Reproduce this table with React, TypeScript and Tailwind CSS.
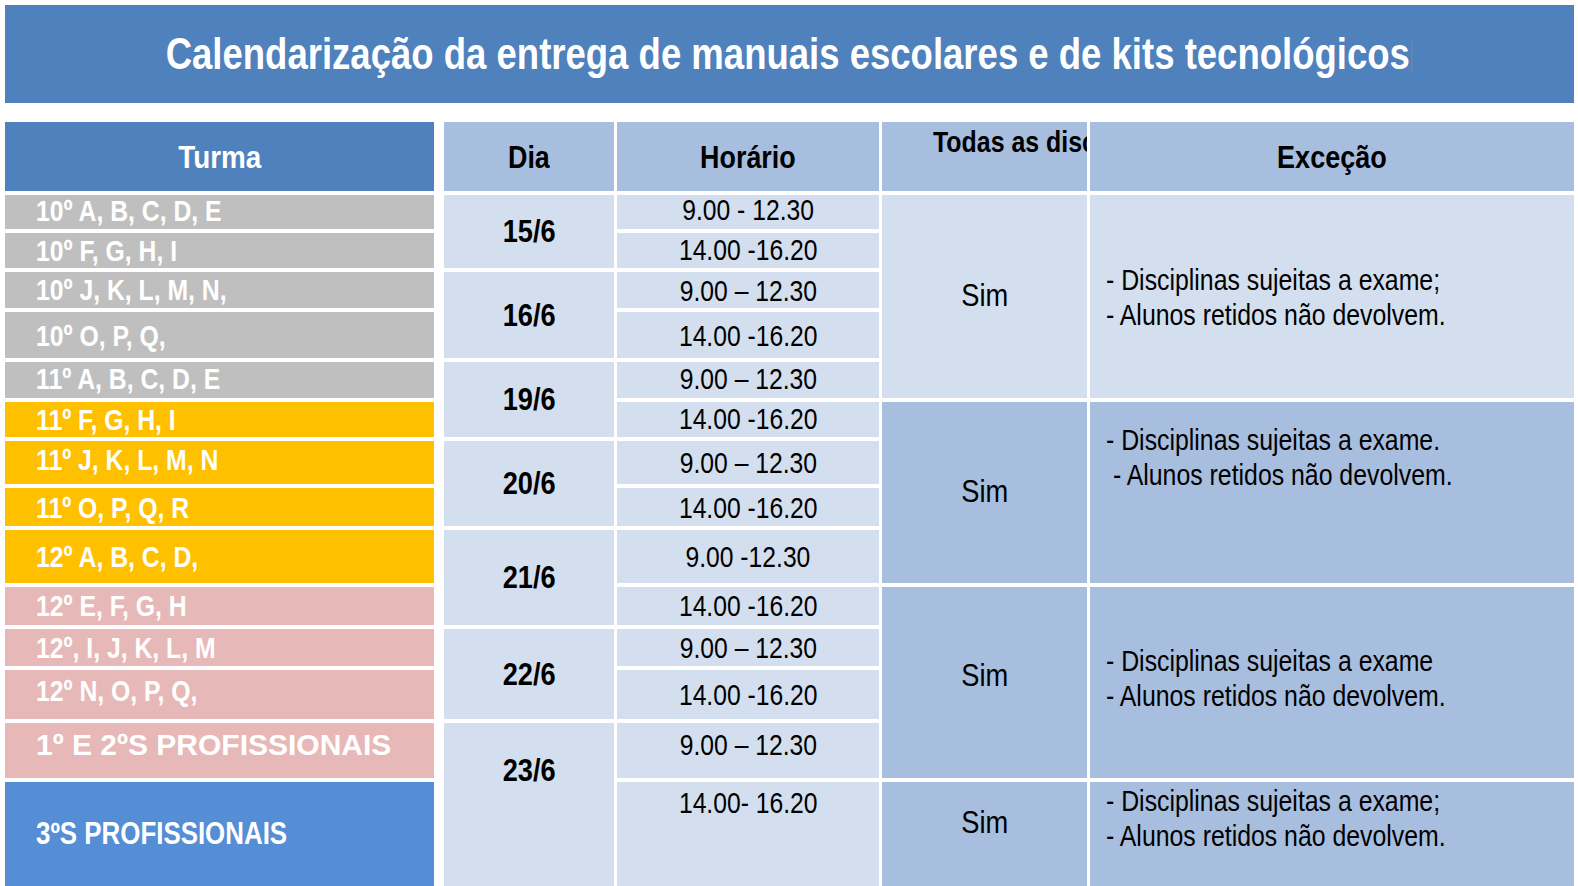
const sans = "font-['Liberation_Sans',Arial,sans-serif]";

// Arial Narrow is not installed, so narrow text is Liberation Sans squeezed horizontally
function Narrow({ children, className = "" }: { children: React.ReactNode; className?: string }) {
  return <span className={`inline-block whitespace-pre ${className}`}>{children}</span>;
}

const turmas = [
  { label: "10º A, B, C, D, E", cls: "row-start-2 bg-[#bfbfbf] pb-[4px]" },
  { label: "10º F, G, H, I", cls: "row-start-3 bg-[#bfbfbf]" },
  { label: "10º J, K, L, M, N,", cls: "row-start-4 bg-[#bfbfbf] pb-[2px]" },
  { label: "10º O, P, Q,", cls: "row-start-5 bg-[#bfbfbf]" },
  { label: "11º A, B, C, D, E", cls: "row-start-6 bg-[#bfbfbf] pb-[4px]" },
  { label: "11º F, G, H, I", cls: "row-start-7 bg-[#ffc000]" },
  { label: "11º J, K, L, M, N", cls: "row-start-8 bg-[#ffc000] pb-[7px]" },
  { label: "11º O, P, Q, R", cls: "row-start-9 bg-[#ffc000]" },
  { label: "12º A, B, C, D,", cls: "row-start-10 bg-[#ffc000]" },
  { label: "12º E, F, G, H", cls: "row-start-11 bg-[#e6b9b8] pb-[2px]" },
  { label: "12º, I, J, K, L, M", cls: "row-start-12 bg-[#e6b9b8]" },
  { label: "12º N, O, P, Q,", cls: "row-start-13 bg-[#e6b9b8] pb-[8px]" },
];

const horarios = [
  { t: "9.00 - 12.30", cls: "row-start-2 pb-[6px]" },
  { t: "14.00 -16.20", cls: "row-start-3 pb-[2px]" },
  { t: "9.00 – 12.30", cls: "row-start-4" },
  { t: "14.00 -16.20", cls: "row-start-5" },
  { t: "9.00 – 12.30", cls: "row-start-6 pb-[4px]" },
  { t: "14.00 -16.20", cls: "row-start-7 pb-[2px]" },
  { t: "9.00 – 12.30", cls: "row-start-8" },
  { t: "14.00 -16.20", cls: "row-start-9" },
  { t: "9.00 -12.30", cls: "row-start-10" },
  { t: "14.00 -16.20", cls: "row-start-11 pb-[2px]" },
  { t: "9.00 – 12.30", cls: "row-start-12" },
  { t: "14.00 -16.20", cls: "row-start-13" },
  { t: "9.00 – 12.30", cls: "row-start-14 pb-[12px]" },
];

const dias = [
  { d: "15/6", cls: "row-start-2 row-span-2 items-center" },
  { d: "16/6", cls: "row-start-4 row-span-2 items-center" },
  { d: "19/6", cls: "row-start-6 row-span-2 items-center" },
  { d: "20/6", cls: "row-start-8 row-span-2 items-center" },
  { d: "21/6", cls: "row-start-10 row-span-2 items-center" },
  { d: "22/6", cls: "row-start-12 row-span-2 items-center" },
  { d: "23/6", cls: "row-start-14 row-span-2 items-start pt-[29px]" },
];

const excecoes = [
  {
    lines: ["- Disciplinas sujeitas a exame;", "- Alunos retidos não devolvem."],
    sim: "row-start-2 row-span-5 bg-[#d3dfee] items-center",
    exc: "row-start-2 row-span-5 bg-[#d3dfee] items-center",
  },
  {
    lines: ["- Disciplinas sujeitas a exame.", " - Alunos retidos não devolvem."],
    sim: "row-start-7 row-span-4 bg-[#a8bedf] items-center",
    exc: "row-start-7 row-span-4 bg-[#a8bedf] items-start pt-[20px]",
  },
  {
    lines: ["- Disciplinas sujeitas a exame", "- Alunos retidos não devolvem."],
    sim: "row-start-11 row-span-4 bg-[#a8bedf] items-center pb-[12px]",
    exc: "row-start-11 row-span-4 bg-[#a8bedf] items-center pb-[10px]",
  },
  {
    lines: ["- Disciplinas sujeitas a exame;", "- Alunos retidos não devolvem."],
    sim: "row-start-15 bg-[#a8bedf] items-center pb-[22px]",
    exc: "row-start-15 bg-[#a8bedf] items-start pt-px",
  },
];

export default function App() {
  return (
    <div className={`w-[1578px] h-[886px] bg-white pt-[5px] pl-[5px] pr-[4px] overflow-hidden ${sans}`}>
      {/* Title bar */}
      <div className="h-[98px] bg-[#4f81bd] flex items-center justify-center">
        <h1 className="text-[44px] font-bold text-white leading-none">
          <Narrow className="scale-x-[0.83] origin-center">
            Calendarização da entrega de manuais escolares e de kits tecnológicos
            <span className="inline-block w-px h-[32px] bg-[#8a8a8a] ml-[2px] align-middle" />
          </Narrow>
        </h1>
      </div>

      {/* Table */}
      <div className="mt-[19px] grid grid-cols-[436px_170px_262px_205px_484px] grid-rows-[69px_34px_35px_36px_46px_36px_35px_43px_38px_53px_38px_37px_49px_55px_104px] gap-x-[3px] gap-y-[4px]">
        {/* Header row */}
        <div className="col-start-1 row-start-1 mr-[7px] bg-[#4f81bd] flex items-center justify-center text-[32px] font-bold text-white">
          <Narrow className="scale-x-[0.87]">Turma</Narrow>
        </div>
        <div className="col-start-2 row-start-1 bg-[#a8bedf] flex items-center justify-center text-[32px] font-bold text-black">
          <Narrow className="scale-x-[0.84]">Dia</Narrow>
        </div>
        <div className="col-start-3 row-start-1 bg-[#a8bedf] flex items-center justify-center text-[32px] font-bold text-black">
          <Narrow className="scale-x-[0.84]">Horário</Narrow>
        </div>
        <div className="col-start-4 row-start-1 bg-[#a8bedf] overflow-hidden pl-[51px] pt-[2px] text-[30px] leading-[36px] font-bold text-black">
          <Narrow className="scale-x-[0.83] origin-left">Todas as disciplinas</Narrow>
        </div>
        <div className="col-start-5 row-start-1 bg-[#a8bedf] flex items-center justify-center text-[32px] font-bold text-black">
          <Narrow className="scale-x-[0.845]">Exceção</Narrow>
        </div>

        {/* Turma column */}
        {turmas.map((t) => (
          <div
            key={t.label}
            className={`col-start-1 mr-[7px] flex items-center pl-[31px] text-[30px] font-bold text-white ${t.cls}`}
          >
            <Narrow className="scale-x-[0.825] origin-left">{t.label}</Narrow>
          </div>
        ))}
        <div className="col-start-1 row-start-14 mr-[7px] bg-[#e6b9b8] flex items-center pl-[31px] pb-[12px] text-[30px] font-bold text-white whitespace-nowrap">
          1º E 2ºS PROFISSIONAIS
        </div>
        <div className="col-start-1 row-start-15 mr-[7px] bg-[#558ed5] flex items-center pl-[31px] text-[31px] font-bold text-white">
          <Narrow className="scale-x-[0.835] origin-left">3ºS PROFISSIONAIS</Narrow>
        </div>

        {/* Dia column */}
        {dias.map((d) => (
          <div
            key={d.d}
            className={`col-start-2 bg-[#d3dfee] flex justify-center text-[32px] font-bold text-black leading-[37px] ${d.cls}`}
          >
            <Narrow className="scale-x-[0.85]">{d.d}</Narrow>
          </div>
        ))}

        {/* Horário column */}
        {horarios.map((h, i) => (
          <div
            key={i}
            className={`col-start-3 bg-[#d3dfee] flex items-center justify-center text-[30px] text-black ${h.cls}`}
          >
            <Narrow className="scale-x-[0.823]">{h.t}</Narrow>
          </div>
        ))}
        <div className="col-start-3 row-start-15 bg-[#d3dfee] flex justify-center pt-[3px] text-[30px] leading-[35px] text-black">
          <Narrow className="scale-x-[0.823]">14.00- 16.20</Narrow>
        </div>

        {/* Todas as disciplinas + Exceção */}
        {excecoes.map((e, i) => (
          <div key={i} className="contents">
            <div className={`col-start-4 flex justify-center text-[31px] text-black ${e.sim}`}>
              <Narrow className="scale-x-[0.88]">Sim</Narrow>
            </div>
            <div className={`col-start-5 flex pl-[16px] text-[30px] leading-[35px] text-black ${e.exc}`}>
              <div>
                {e.lines.map((l) => (
                  <div key={l}>
                    <Narrow className="scale-x-[0.828] origin-left">{l}</Narrow>
                  </div>
                ))}
              </div>
            </div>
          </div>
        ))}
      </div>
    </div>
  );
}
